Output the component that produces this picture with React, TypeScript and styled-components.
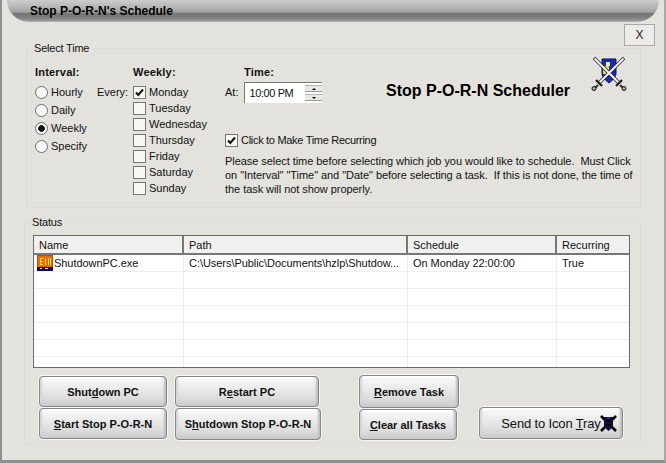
import React from 'react';
import styled, { createGlobalStyle } from 'styled-components';

const GlobalStyle = createGlobalStyle`
  html, body {
    margin: 0;
    padding: 0;
    background: #e3e2dd;
  }
  * {
    box-sizing: border-box;
  }
`;

const Window = styled.div`
  width: 666px;
  height: 463px;
  overflow: hidden;
  display: flex;
  flex-direction: column;
  background: #e3e2dd;
  border-left: 2px solid #8f8f8f;
  border-right: 2px solid #a9a9a9;
  border-bottom: 3px solid #8f8f8f;
  color: #111;
  font-family: 'Liberation Sans', Arial, sans-serif;
  font-size: 11px;
  line-height: 13px;
`;

const TitleBar = styled.div`
  flex: none;
  height: 22px;
  margin: 0 5px;
  padding: 5px 0 0 23px;
  border-radius: 0 0 22px 22px;
  background: linear-gradient(#cdcdcd 0, #b8b8b8 30%, #a0a0a0 56%, #747474 60%, #7e7e7e 78%, #909090 92%, #b9b9b9 100%);
  font-size: 12px;
  font-weight: bold;
  color: #000;
`;

const CloseRow = styled.div`
  flex: none;
  display: flex;
  justify-content: flex-end;
  padding: 2px 9px 2px 0;
`;

const CloseButton = styled.button`
  width: 31px;
  height: 22px;
  padding: 0;
  border: 1px solid #a8a8a8;
  background: #ecebe7;
  font: 12px 'Liberation Sans', Arial, sans-serif;
  color: #222;
`;

const GroupBox = styled.section<{ $height: number; $left: number; $gap?: number }>`
  position: relative;
  flex: none;
  height: ${(p) => p.$height}px;
  margin: ${(p) => p.$gap ?? 0}px 23px 0 ${(p) => p.$left}px;
  border: 1px solid #dddcd7;
`;

const GroupCaption = styled.span`
  position: absolute;
  top: -7px;
  left: 4px;
  padding: 0 3px;
  background: #e3e2dd;
  letter-spacing: -0.2px;
`;

const TimeBody = styled.div`
  display: flex;
  height: 100%;
  padding: 17px 0 0 8px;
`;

const IntervalColumn = styled.div`
  width: 62px;
  flex: none;
`;

const Heading = styled.div<{ $indent?: number }>`
  height: 13px;
  margin-left: ${(p) => p.$indent ?? 0}px;
  font-weight: bold;
  letter-spacing: 0.2px;
`;

const RadioList = styled.div`
  display: flex;
  flex-direction: column;
  gap: 5px;
  margin-top: 7px;
`;

const OptionRow = styled.div`
  display: flex;
  align-items: center;
  height: 13px;
  gap: 3px;
`;

const RadioDot = styled.span<{ $on?: boolean }>`
  flex: none;
  width: 13px;
  height: 13px;
  border-radius: 50%;
  border: 1px solid #6f6f6f;
  background: radial-gradient(circle at 50% 50%, ${(p) => (p.$on ? '#111 0 3px, #f4f4f4 3.6px' : '#f7f7f7 0, #f7f7f7 100%')});
`;

const EveryLabel = styled.div`
  width: 36px;
  flex: none;
  padding-top: 20px;
`;

const WeeklyColumn = styled.div`
  width: 92px;
  flex: none;
`;

const CheckList = styled.div`
  display: flex;
  flex-direction: column;
  gap: 3px;
  margin-top: 7px;
`;

const CheckBox = styled.span`
  flex: none;
  width: 13px;
  height: 13px;
  display: flex;
  border: 1px solid #777;
  background: #f6f6f4;
`;

const RightColumn = styled.div`
  flex: 1;
  display: flex;
  flex-direction: column;
`;

const TopRow = styled.div`
  display: flex;
  height: 68px;
`;

const TimeBlock = styled.div`
  width: 161px;
  flex: none;
`;

const TimeRow = styled.div`
  display: flex;
  align-items: center;
  gap: 6px;
  margin-top: 3px;
`;

const TimeInput = styled.div`
  position: relative;
  display: flex;
  align-items: center;
  justify-content: space-between;
  width: 78px;
  height: 21px;
  padding-left: 4px;
  background: #fff;
  border-top: 1px solid #777;
  border-left: 1px solid #777;
  letter-spacing: -0.4px;
`;

const Spinner = styled.div`
  display: flex;
  flex-direction: column;
  gap: 2px;
  width: 17px;
`;

const SpinButton = styled.span`
  display: flex;
  align-items: center;
  justify-content: center;
  height: 7px;
  background: #e8e8e4;
  border-top: 1px solid #b5b5b5;
  border-bottom: 1px solid #999;
`;

const SpinArrow = styled.span<{ $down?: boolean }>`
  width: 0;
  height: 0;
  border-left: 2px solid transparent;
  border-right: 2px solid transparent;
  ${(p) => (p.$down ? 'border-top: 2px solid #000;' : 'border-bottom: 2px solid #000;')}
`;

const Banner = styled.div`
  width: 183px;
  flex: none;
  padding-top: 16px;
  font-size: 16px;
  line-height: 18px;
  font-weight: bold;
  color: #000;
  white-space: nowrap;
`;

const ShieldSlot = styled.div`
  margin: -10px 0 0 22px;
`;

const RecurringRow = styled(OptionRow)`
  letter-spacing: -0.3px;
`;

const Note = styled.p`
  margin: 7px 0 0;
  line-height: 14px;
  white-space: pre;
  letter-spacing: -0.055px;
`;

const StatusBody = styled.div`
  padding: 12px 10px 0 8px;
`;

const TaskTable = styled.table`
  width: 597px;
  height: 133px;
  table-layout: fixed;
  border-collapse: separate;
  border-spacing: 0;
  background: #fff;
  border: 1px solid #6b6b6b;
`;

const HeadCell = styled.th<{ $width: number }>`
  width: ${(p) => p.$width}px;
  height: 19px;
  padding: 1px 0 0 5px;
  background: #f0f0ee;
  border-bottom: 2px solid #777;
  border-right: 2px solid #777;
  font-weight: normal;
  text-align: left;
  &:last-child {
    border-right: none;
  }
`;

const Cell = styled.td`
  height: 17px;
  padding: 1px 0 0 5px;
  border-bottom: 1px solid #eee;
  border-right: 1px solid #eee;
  white-space: nowrap;
  overflow: hidden;
  letter-spacing: -0.05px;
  &:last-child {
    border-right: none;
  }
  tr:last-child & {
    height: 10px;
    border-bottom: none;
  }
`;

const NameCell = styled.div`
  display: flex;
  align-items: center;
  gap: 1px;
  margin: -1px 0 0 -2px;
`;

const ButtonArea = styled.div`
  display: flex;
  margin: 8px 0 0 6px;
`;

const ButtonColumn = styled.div<{ $width: number; $top?: number }>`
  width: ${(p) => p.$width}px;
  flex: none;
  display: flex;
  flex-direction: column;
  gap: 1px;
  margin-top: ${(p) => p.$top ?? 0}px;
`;

const ChromeButton = styled.button<{ $w: number; $h: number; $plain?: boolean }>`
  position: relative;
  width: ${(p) => p.$w}px;
  height: ${(p) => p.$h}px;
  padding: 0;
  border: 1px solid #858585;
  border-radius: 4px;
  background: linear-gradient(#fafafa 0, #f0f0f0 25%, #dedede 70%, #cacaca 100%);
  box-shadow: inset 4px 0 2px -2px #d4d4d4, inset -4px 0 2px -2px #bdbdbd, inset 0 2px 0 #fff, 0 0 0 1px #f6f6f4;
  font-family: 'Liberation Sans', Arial, sans-serif;
  font-size: ${(p) => (p.$plain ? 13 : 11)}px;
  font-weight: ${(p) => (p.$plain ? 'normal' : 'bold')};
  letter-spacing: ${(p) => (p.$plain ? -0.15 : 0)}px;
  color: #111;
  white-space: nowrap;
`;

const TrayGlyph = styled.span`
  position: absolute;
  top: 7px;
  right: 5px;
  display: flex;
`;

const ShieldIcon = () => (
  <svg width="36" height="36" viewBox="0 0 36 36">
    <path d="M11 3h14v14c0 4-3 7-7 10-4-3-7-6-7-10z" fill="#1a2cae" stroke="#0c1450" strokeWidth="1" />
    <path d="M12 10h6v8h-6z" fill="#e8d44a" />
    <path d="M15 6h4v4h-4z" fill="#f1e6a0" />
    <path d="M3 2L28 27M33 2L8 27" stroke="#222" strokeWidth="3.4" />
    <path d="M3.500 2.500L28 27M32.500 2.500L8 27" stroke="#f6f6f6" strokeWidth="2" />
    <path d="M25 30L31 24M11 30L5 24" stroke="#222" strokeWidth="2.4" />
    <path d="M29 29L32 32M7 29L4 32" stroke="#333" strokeWidth="2" />
    <circle cx="33" cy="32.500" r="2" fill="#aaa" stroke="#111" />
    <circle cx="3" cy="32.500" r="2" fill="#aaa" stroke="#111" />
  </svg>
);

const ExeIcon = () => (
  <svg width="16" height="16" viewBox="0 0 16 16">
    <rect width="16" height="16" fill="#d8401a" />
    <rect x="1" y="1" width="14" height="11" fill="#ee6a10" />
    <path d="M3 3h3v1H4v2h2v1H4v2h2v1H3zM8 3h1v7H8zM11 3h1v7h-1zM13 3h1v7h-1z" fill="#ffe23c" />
    <rect y="12" width="16" height="4" fill="#0b0b50" />
    <rect x="3" y="13" width="2" height="1" fill="#ddd" />
    <rect x="8" y="13" width="3" height="1" fill="#ddd" />
  </svg>
);

const TrayIcon = () => (
  <svg width="17" height="17" viewBox="0 0 17 17">
    <path d="M1 1L16 16M16 1L1 16" stroke="#000" strokeWidth="2.600" />
    <path d="M4 2h9v10l-4.500 4L4 12z" fill="#10103a" />
    <path d="M6 5h5v2H6zM6 9h5v2H6z" fill="#000" />
    <path d="M7 2h3v2H7z" fill="#2a2a8a" />
  </svg>
);

const CheckMark = () => (
  <svg width="11" height="11" viewBox="0 0 11 11">
    <path d="M2 5.500l2.300 2.500L9 2.500" fill="none" stroke="#111" strokeWidth="2" />
  </svg>
);

const days = ['Monday', 'Tuesday', 'Wednesday', 'Thursday', 'Friday', 'Saturday', 'Sunday'];
const intervals = ['Hourly', 'Daily', 'Weekly', 'Specify'];
const columns = [
  { name: 'Name', width: 150 },
  { name: 'Path', width: 224 },
  { name: 'Schedule', width: 149 },
  { name: 'Recurring', width: 72 },
];
const emptyRows = [1, 2, 3, 4, 5, 6];

const App: React.FC = () => {
  return (
    <Window>
      <GlobalStyle />
      <TitleBar>Stop P-O-R-N's Schedule</TitleBar>
      <CloseRow>
        <CloseButton>X</CloseButton>
      </CloseRow>

      <GroupBox $height={160} $left={24}>
        <GroupCaption>Select Time</GroupCaption>
        <TimeBody>
          <IntervalColumn>
            <Heading>Interval:</Heading>
            <RadioList>
              {intervals.map((item) => (
                <OptionRow key={item}>
                  <RadioDot $on={item === 'Weekly'} />
                  {item}
                </OptionRow>
              ))}
            </RadioList>
          </IntervalColumn>
          <EveryLabel>Every:</EveryLabel>
          <WeeklyColumn>
            <Heading>Weekly:</Heading>
            <CheckList>
              {days.map((day) => (
                <OptionRow key={day}>
                  <CheckBox>{day === 'Monday' && <CheckMark />}</CheckBox>
                  {day}
                </OptionRow>
              ))}
            </CheckList>
          </WeeklyColumn>
          <RightColumn>
            <TopRow>
              <TimeBlock>
                <Heading $indent={19}>Time:</Heading>
                <TimeRow>
                  At:
                  <TimeInput>
                    10:00 PM
                    <Spinner>
                      <SpinButton>
                        <SpinArrow />
                      </SpinButton>
                      <SpinButton>
                        <SpinArrow $down />
                      </SpinButton>
                    </Spinner>
                  </TimeInput>
                </TimeRow>
              </TimeBlock>
              <Banner>Stop P-O-R-N Scheduler</Banner>
              <ShieldSlot>
                <ShieldIcon />
              </ShieldSlot>
            </TopRow>
            <RecurringRow>
              <CheckBox>
                <CheckMark />
              </CheckBox>
              Click to Make Time Recurring
            </RecurringRow>
            <Note>
              {'Please select time before selecting which job you would like to schedule.  Must Click\non "Interval" "Time" and "Date" before selecting a task.  If this is not done, the time of\nthe task will not show properly.'}
            </Note>
          </RightColumn>
        </TimeBody>
      </GroupBox>

      <GroupBox $height={222} $left={22} $gap={14}>
        <GroupCaption>Status</GroupCaption>
        <StatusBody>
          <TaskTable>
            <thead>
              <tr>
                {columns.map((col) => (
                  <HeadCell key={col.name} $width={col.width}>
                    {col.name}
                  </HeadCell>
                ))}
              </tr>
            </thead>
            <tbody>
              <tr>
                <Cell>
                  <NameCell>
                    <ExeIcon />
                    ShutdownPC.exe
                  </NameCell>
                </Cell>
                <Cell>C:\Users\Public\Documents\hzlp\Shutdow...</Cell>
                <Cell>On Monday 22:00:00</Cell>
                <Cell>True</Cell>
              </tr>
              {emptyRows.map((row) => (
                <tr key={row}>
                  <Cell />
                  <Cell />
                  <Cell />
                  <Cell />
                </tr>
              ))}
            </tbody>
          </TaskTable>
          <ButtonArea>
            <ButtonColumn $width={136}>
              <ChromeButton $w={128} $h={31}>
                Shut<u>d</u>own PC
              </ChromeButton>
              <ChromeButton $w={128} $h={31}>
                <u>S</u>tart Stop P-O-R-N
              </ChromeButton>
            </ButtonColumn>
            <ButtonColumn $width={184}>
              <ChromeButton $w={144} $h={31}>
                R<u>e</u>start PC
              </ChromeButton>
              <ChromeButton $w={146} $h={32}>
                S<u>h</u>utdown Stop P-O-R-N
              </ChromeButton>
            </ButtonColumn>
            <ButtonColumn $width={120} $top={-1}>
              <ChromeButton $w={100} $h={33}>
                <u>R</u>emove Task
              </ChromeButton>
              <ChromeButton $w={98} $h={31}>
                <u>C</u>lear all Tasks
              </ChromeButton>
            </ButtonColumn>
            <ButtonColumn $width={144} $top={31}>
              <ChromeButton $w={144} $h={32} $plain>
                Send to Icon <u>T</u>ray
                <TrayGlyph>
                  <TrayIcon />
                </TrayGlyph>
              </ChromeButton>
            </ButtonColumn>
          </ButtonArea>
        </StatusBody>
      </GroupBox>
    </Window>
  );
};

export default App;
